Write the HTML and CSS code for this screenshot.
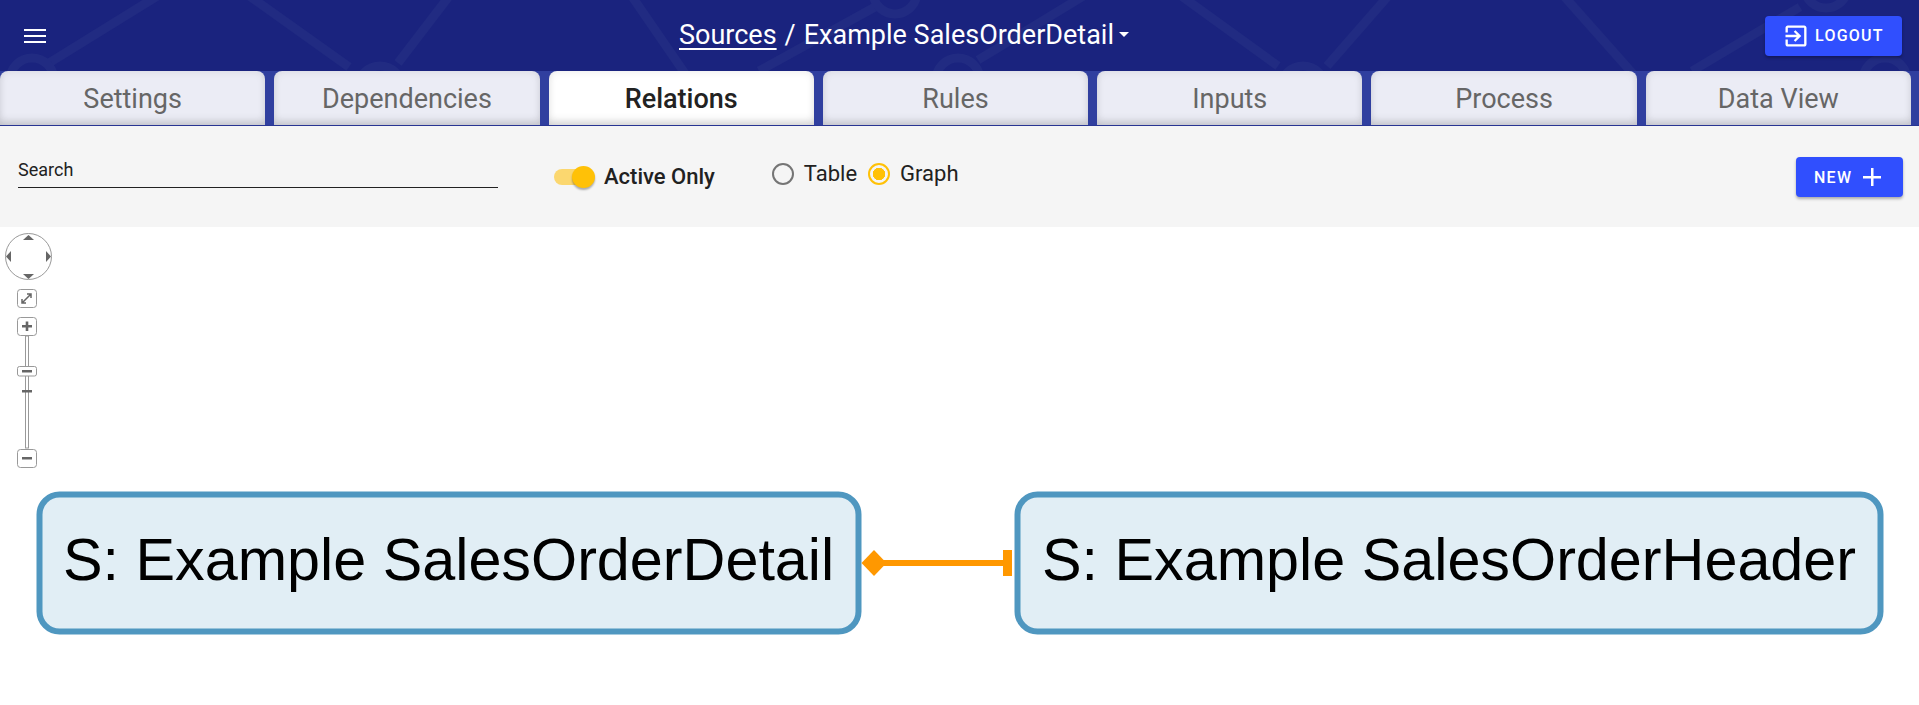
FILE: index.html
```html
<!DOCTYPE html>
<html>
	<head>
		<meta charset='utf-8'/>
		<title>Example SalesOrderDetail - Relations</title>
		<link rel="stylesheet" href="styles.css">
	</head>
	<body>
		<header class="topbar">
			<svg class="topbar-pattern" width="1919" height="71" viewBox="0 0 1919 71">
				<g fill="none" stroke="#212b82" stroke-width="9">
					<path d="M49 63 L159 -5"/>
					<path d="M248 -5 L349 67"/>
					<path d="M398 63 L450 -5"/>
					<path d="M631 -5 L686 75"/>
					<path d="M759 71 L875 7"/>
					<path d="M978 60 L1085 -5"/>
					<path d="M1180 -5 L1278 66"/>
					<path d="M1327 66 L1389 -5"/>
					<path d="M1563 -5 L1634 75"/>
					<path d="M1692 71 L1800 7"/>
					<circle cx="32" cy="80" r="22"/>
					<circle cx="380" cy="88" r="22"/>
					<circle cx="958" cy="80" r="22"/>
					<circle cx="1303" cy="88" r="22"/>
					<circle cx="1885" cy="80" r="22"/>
					<circle cx="895" cy="-8" r="22"/>
					<circle cx="1826" cy="-14" r="22"/>
				</g>
			</svg>
			<button class="menu-btn" aria-label="menu">
				<svg width="22" height="16" viewBox="0 0 22 16"><path d="M0 1h22v2H0zM0 7h22v2H0zM0 13h22v2H0z" fill="#fff"/></svg>
			</button>
			<div class="crumbs">
				<a class="crumb-link">Sources</a>
				<span class="crumb-sep">/</span>
				<span>Example SalesOrderDetail</span>
				<span class="caret"></span>
			</div>
			<button class="btn btn-logout">
				<svg width="28" height="28" viewBox="0 0 24 24"><path fill="#fff" d="M10.09 15.59L11.5 17l5-5-5-5-1.41 1.41L12.67 11H3v2h9.67l-2.58 2.59zM19 3H5c-1.11 0-2 .9-2 2v4h2V5h14v14H5v-4H3v4c0 1.1.89 2 2 2h14c1.1 0 2-.9 2-2V5c0-1.1-.9-2-2-2z"/></svg>
				Logout
			</button>
		</header>
		<nav class="tabs">
			<a class="tab">Settings</a>
			<a class="tab">Dependencies</a>
			<a class="tab tab-active">Relations</a>
			<a class="tab">Rules</a>
			<a class="tab">Inputs</a>
			<a class="tab">Process</a>
			<a class="tab">Data View</a>
		</nav>
		<section class="toolbar">
			<div class="search">Search</div>
			<div class="toggle"><span class="toggle-track"><span class="toggle-thumb"></span></span></div>
			<div class="toggle-label">Active Only</div>
			<div class="radios">
				<span class="radio"></span><span class="radio-label">Table</span>
				<span class="radio radio-on"></span><span class="radio-label">Graph</span>
			</div>
			<button class="btn btn-new">
				New
				<svg width="18" height="18" viewBox="0 0 18 18"><path d="M8 0h2.500v8H18v2.500h-7.500V18H8v-7.500H0V8h8z" fill="#fff"/></svg>
			</button>
		</section>
		<main class="graph">
			<svg class="graph-nav" width="60" height="250" viewBox="0 0 60 250">
				<circle cx="28.5" cy="31.5" r="23" fill="#fff" stroke="#999" stroke-width="1"/>
				<g fill="#666">
					<path d="M28.5 10l5.500 5h-11z"/>
					<path d="M28.500 54l5.500-5h-11z"/>
					<path d="M6 31.500l5-5.500v11z"/>
					<path d="M51 31.500l-5-5.500v11z"/>
				</g>
				<g fill="#fff" stroke="#999">
					<rect x="17.500" y="64.500" width="19" height="18" rx="3"/>
					<rect x="25.500" y="111" width="3" height="112"/>
					<rect x="17.500" y="92.500" width="19" height="18" rx="3"/>
					<rect x="17.500" y="141.500" width="19" height="9.500" rx="2"/>
					<rect x="17.500" y="224.500" width="19" height="18" rx="3"/>
				</g>
				<path d="M22 78l9-9M22 74v4h4M31 73v-4h-4" fill="none" stroke="#666" stroke-width="1.500"/>
				<g fill="#666">
					<path d="M22 100h10v2.500H22zM25.700 96.500h2.600v9.500h-2.600z"/>
					<path d="M22 145h10v2.500H22z"/>
					<path d="M22 165h10v2.500H22z"/>
					<path d="M22 232h10v2.500H22z"/>
				</g>
			</svg>
			<svg class="graph-canvas" width="1919" height="478" viewBox="0 227 1919 478">
				<rect x="39.500" y="494.500" width="819" height="137" rx="20" fill="#e1eef5" stroke="#4f97c0" stroke-width="6"/>
				<text x="63" y="580" class="node-text">S: Example SalesOrderDetail</text>
				<rect x="1017.500" y="494.500" width="863" height="137" rx="20" fill="#e1eef5" stroke="#4f97c0" stroke-width="6"/>
				<text x="1042" y="580" class="node-text">S: Example SalesOrderHeader</text>
				<path d="M883 563h122" stroke="#ff9800" stroke-width="6"/>
				<path d="M861.500 563l12.500-13 12.500 13-12.500 13z" fill="#ff9800"/>
				<path d="M1003 550h9v26h-9z" fill="#ff9800"/>
			</svg>
		</main>
	</body>
</html>
```

FILE: styles.css
```css
* {
	box-sizing: border-box;
}
html, body {
	height: 100%;
}
body {
	margin: 0;
	overflow: hidden;
	background: #fff;
	font-family: Roboto, sans-serif;
	display: flex;
	flex-direction: column;
}
button {
	font-family: inherit;
	border: 0;
	cursor: pointer;
}
.topbar {
	position: relative;
	height: 71px;
	flex: none;
	background: #1a237e;
	color: #fff;
	display: flex;
	align-items: center;
	padding: 0 17px 0 24px;
	overflow: hidden;
}
.topbar-pattern {
	position: absolute;
	left: 0;
	top: 0;
}
.menu-btn {
	position: relative;
	background: none;
	padding: 0;
	display: flex;
	width: 22px;
}
.crumbs {
	position: relative;
	display: flex;
	align-items: center;
	font-size: 27px;
	margin-left: 633px;
	flex: 1;
	margin-top: -2px;
}
.crumb-link {
	text-decoration: underline;
	text-underline-offset: 4px;
}
.crumb-sep {
	margin: 0 8px;
}
.caret {
	border: 5.500px solid transparent;
	border-top-color: #fff;
	border-bottom: 0;
	margin-left: 5px;
}
.btn {
	background: #304ffe;
	color: #fff;
	border-radius: 4px;
	text-transform: uppercase;
	font-weight: 500;
	font-size: 16px;
	letter-spacing: 1.250px;
	display: flex;
	align-items: center;
	box-shadow: 0 2px 3px rgba(0, 0, 0, .3);
}
.btn-logout {
	position: relative;
	width: 137px;
	height: 40px;
	padding: 0 0 0 17px;
	gap: 5px;
}
.tabs {
	flex: none;
	height: 55px;
	background: #303f9f;
	border-bottom: 1px solid #283593;
	display: flex;
	gap: 9px;
	padding-right: 8px;
}
.tab {
	flex: 1;
	display: flex;
	align-items: center;
	justify-content: center;
	padding-top: 1px;
	background: #ebecf5;
	border-radius: 8px 8px 0 0;
	color: #666;
	font-size: 27px;
	box-shadow: inset 0 -7px 9px -3px rgba(0, 0, 0, .13), inset 0 0 9px rgba(0, 0, 0, .09);
}
.tab-active {
	background: #fff;
	color: #222;
	font-weight: 500;
}
.toolbar {
	flex: none;
	height: 101px;
	background: #f5f5f5;
	display: flex;
	padding-left: 18px;
	padding-right: 16px;
	align-items: flex-start;
	color: #212121;
}
.search {
	width: 480px;
	height: 62px;
	padding-top: 34px;
	border-bottom: 1px solid #222;
	font-size: 18px;
	line-height: 20px;
}
.toggle {
	margin: 40px 16px 0 56px;
}
.toggle-track {
	display: block;
	width: 34px;
	height: 16px;
	background: #fbd76f;
	border-radius: 8px;
	position: relative;
	margin-top: 3px;
}
.toggle-thumb {
	position: absolute;
	right: -7px;
	top: -3px;
	width: 23px;
	height: 22px;
	border-radius: 50%;
	background: #ffc107;
	box-shadow: 0 2px 2px rgba(0, 0, 0, .3);
}
.toggle-label {
	font-size: 22px;
	font-weight: 500;
	margin-top: 38px;
	line-height: 26px;
}
.radios {
	display: flex;
	align-items: center;
	margin: 35px 0 0 57px;
	font-size: 22px;
	flex: 1;
}
.radio {
	width: 22px;
	height: 22px;
	border: 2px solid #757575;
	border-radius: 50%;
}
.radio-on {
	border-color: #ffc107;
	background: radial-gradient(circle, #ffc107 0 6px, transparent 6.500px);
}
.radio-label {
	margin: 0 11px 0 10px;
}
.btn-new {
	width: 107px;
	height: 40px;
	margin-top: 31px;
	padding: 0 0 0 18px;
	gap: 11px;
}
.graph {
	flex: 1;
	position: relative;
	overflow: hidden;
}
.graph-nav {
	position: absolute;
	left: 0;
	top: -2px;
}
.graph-canvas {
	display: block;
}
.node-text {
	font-family: "Liberation Sans", Arial, sans-serif;
	font-size: 59.300px;
	fill: #000;
}
```
